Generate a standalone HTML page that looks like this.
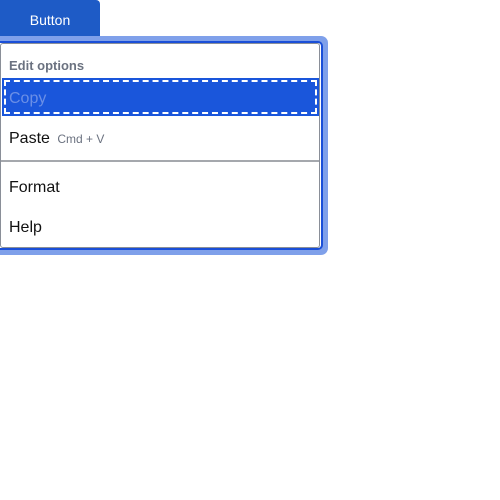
<!DOCTYPE html>
<html><head><style>
html,body{margin:0;padding:0;background:#fff;width:500px;height:500px;overflow:hidden;font-family:"Liberation Sans",sans-serif;}
.btn{position:absolute;left:0;top:0;width:100px;height:36px;background:#1e5bc6;border-top-right-radius:4px;color:#fff;font-size:14px;text-align:center;line-height:40px;}
.ring{position:absolute;left:-10px;top:36px;width:338px;height:219px;background:#7fa0ea;border-radius:7px;}
.dark{position:absolute;left:-5px;top:41px;width:324px;height:205px;border:2px solid #1a4fd8;border-radius:5px;background:#fff;}
.inner{position:absolute;left:0px;top:43px;width:318px;height:203px;border:1px solid #8a8f98;border-radius:3px;background:#fff;}
.t{position:absolute;left:9px;color:#111;font-size:16px;}
.hl{position:absolute;left:2px;top:78px;width:317px;height:38px;background:#1a56db;}
.dash{position:absolute;left:4px;top:80px;width:309px;height:30px;border:2px dashed #fff;}
.div{position:absolute;left:1px;top:160px;width:318px;height:2px;background:#a5a8ad;}
</style></head><body>
<div class="btn">Button</div>
<div class="ring"></div>
<div class="dark"></div>
<div class="inner"></div>
<div class="t" style="top:58px;font-size:13px;font-weight:bold;color:#6b7280;">Edit options</div>
<div class="hl"></div><div class="dash"></div>
<div class="t" style="top:90px;color:#6b8fe6;">Copy</div>
<div class="t" style="top:130px;">Paste <span style="font-size:12px;color:#6b7280;margin-left:3px;">Cmd + V</span></div>
<div class="div"></div>
<div class="t" style="top:179px;">Format</div>
<div class="t" style="top:219px;">Help</div>
</body></html>
